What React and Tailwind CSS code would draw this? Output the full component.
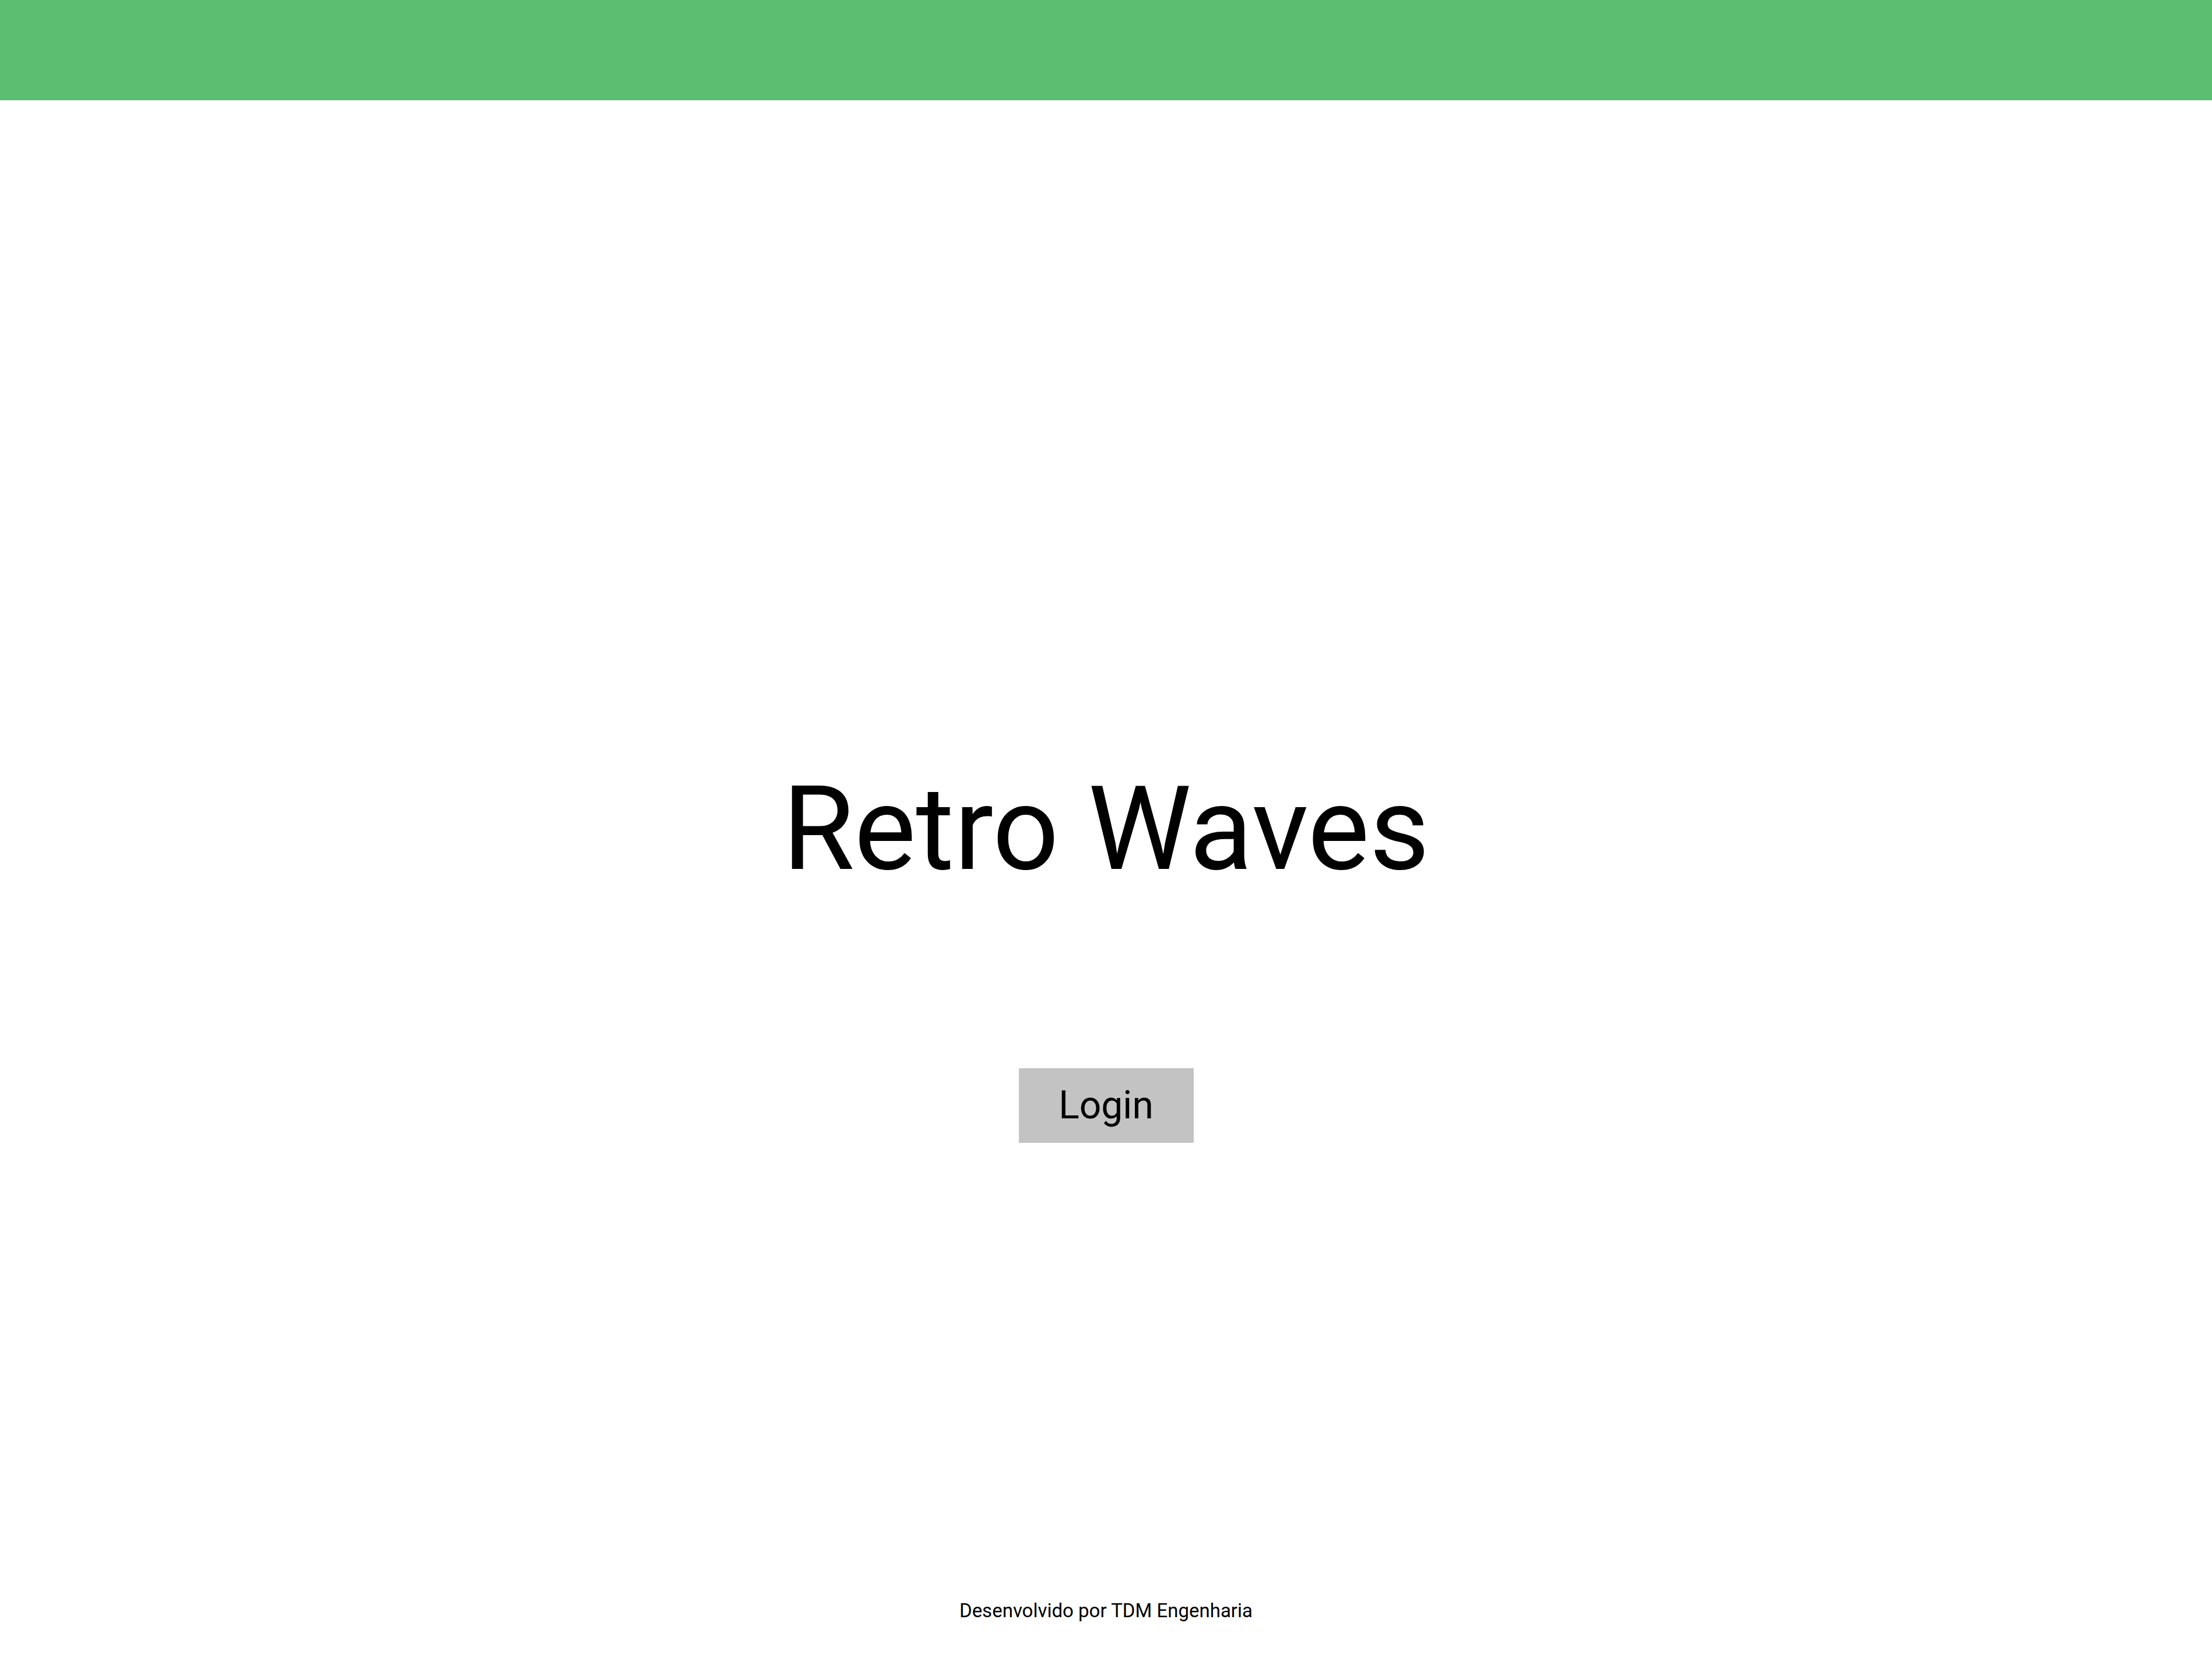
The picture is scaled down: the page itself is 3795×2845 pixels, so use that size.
const App = () => {
  return (
    <div className="min-h-screen flex flex-col bg-white text-black" style={{ fontFamily: 'Roboto, "Liberation Sans", sans-serif' }}>
      <header className="h-[172px] w-full bg-[#5cbe70]" />

      <main className="flex flex-col items-center">
        <h1 className="mt-[1151px] text-[200px] leading-none font-normal">Retro Waves</h1>
        <button className="mt-[310px] flex h-[128px] w-[300px] items-center justify-center bg-[#c3c3c3] text-[66px] leading-none">
          Login
        </button>
      </main>

      <footer className="mt-[786px] flex justify-center text-[33px] leading-none">
        Desenvolvido por TDM Engenharia
      </footer>
    </div>
  );
};

export default App;
